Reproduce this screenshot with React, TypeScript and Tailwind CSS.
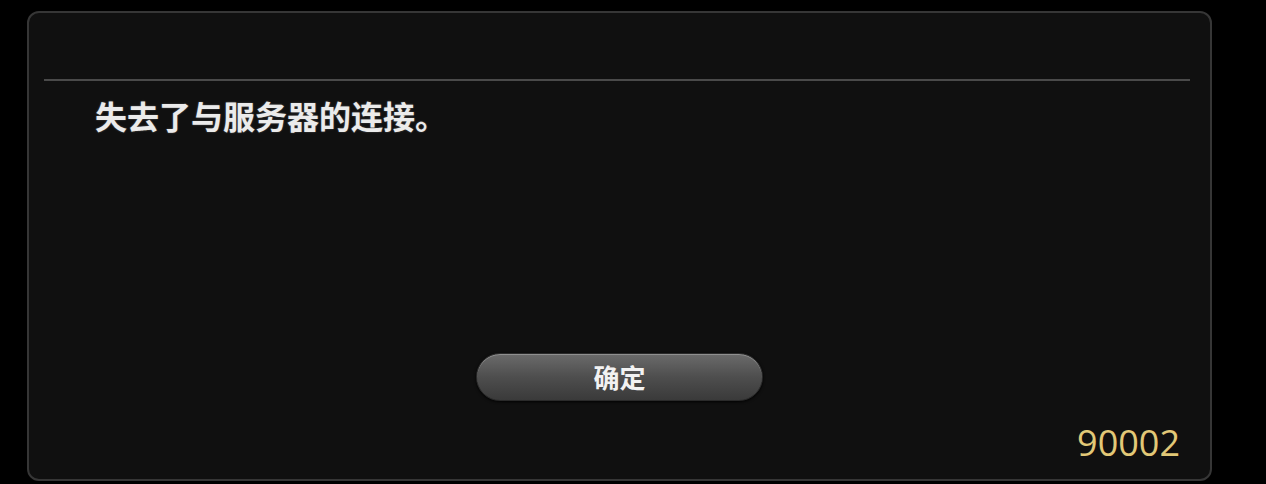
import React from "react";

const cjk = { fontFamily: '"Noto Sans CJK SC", "Noto Sans", sans-serif' };

export default function App() {
  return (
    <div className="w-full h-[484px] bg-black pl-[27px] pt-[11px]">
      {/* Dialog window */}
      <div className="w-[1185px] h-[470px] rounded-[12px] border-2 border-[#363636] bg-[#101010] flex flex-col shadow-[0_0_6px_rgba(0,0,0,0.8)]">
        {/* Title bar (empty) */}
        <div className="h-[66px]" />
        <div className="h-[2px] bg-[#4a4a4a] ml-[15px] mr-[20px]" />

        {/* Message */}
        <p
          className="mt-[18px] pl-[66px] text-[32px] leading-none font-bold text-[#ebebeb] [text-shadow:0_0_2px_rgba(255,255,255,0.3)]"
          style={cjk}
        >
          失去了与服务器的连接。
        </p>

        {/* Confirm button */}
        <div className="mt-[222px] flex justify-center">
          <button
            className="w-[287px] h-[48px] rounded-full border border-[#2a2a2a] bg-gradient-to-b from-[#6b6b6b] via-[#4e4e4e] to-[#3a3a3a] shadow-[inset_0_1px_0_rgba(255,255,255,0.25),0_1px_3px_rgba(0,0,0,0.9)] text-[26px] leading-none font-bold text-[#f2f2f2]"
            style={cjk}
          >
            确定
          </button>
        </div>

        {/* Error code */}
        <div
          className="mt-[24px] pr-[30px] text-right text-[36px] leading-none font-medium text-[#e2c877]"
          style={{ fontFamily: '"Open Sans", sans-serif' }}
        >
          90002
        </div>
      </div>
    </div>
  );
}
